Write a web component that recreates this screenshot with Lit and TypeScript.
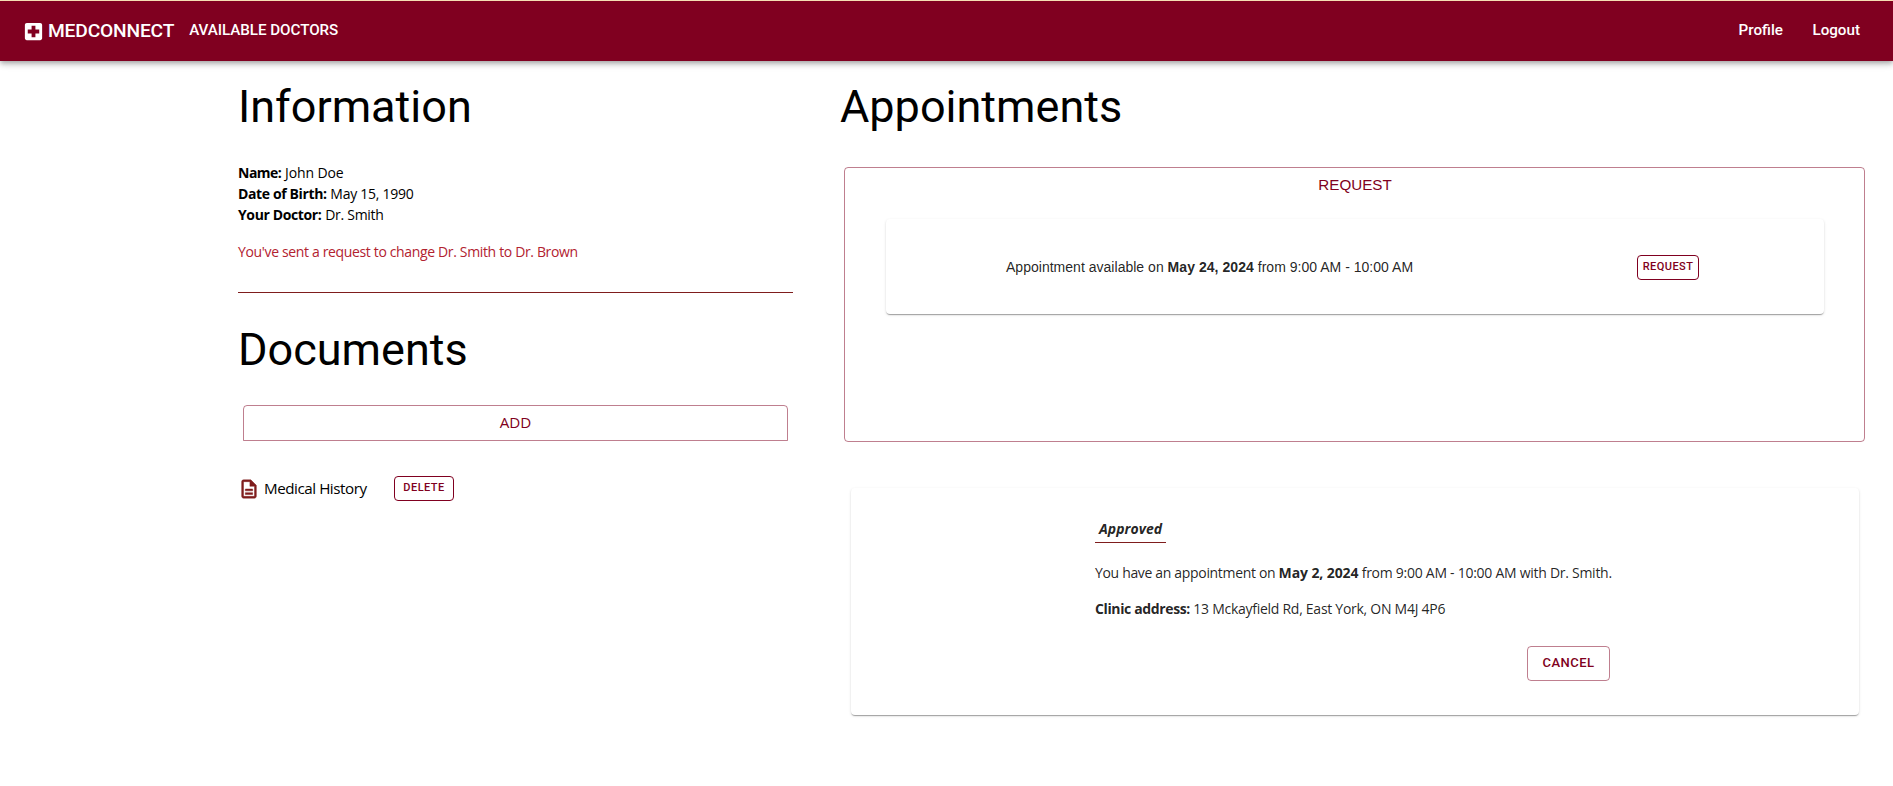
import { LitElement, html, css } from "lit";
import { customElement, property } from "lit/decorators.js";

@customElement("app-navbar")
class AppNavbar extends LitElement {
  static styles = css`
    :host { display: block; }
    .bar {
      display: flex; align-items: center; height: 61px; box-sizing: border-box;
      padding: 0 33px 3px 22px; background: #800020; color: #fff;
      border-top: 1px solid #f5deb3;
      font: 500 15.2px/20px Roboto, sans-serif;
      box-shadow: 0 2px 4px -1px rgba(0,0,0,.2), 0 4px 5px 0 rgba(0,0,0,.14), 0 1px 10px 0 rgba(0,0,0,.12);
    }
    .logo { width: 23px; height: 23px; margin: 3px 3px 0 0; fill: #fff; }
    .brand { font-size: 19.2px; line-height: 24px; letter-spacing: -0.17px; margin: 2px 15px 0 0; }
    .doctors { letter-spacing: -0.06px; }
    .spacer { flex: 1; }
    .link + .link { margin-left: 29.5px; }
  `;
  render() {
    return html`
      <nav class="bar">
        <svg class="logo" viewBox="0 0 24 24"><path d="M19 3H5c-1.100 0-1.990.9-1.990 2L3 19c0 1.100.9 2 2 2h14c1.100 0 2-.9 2-2V5c0-1.100-.9-2-2-2zm-1 11h-4v4h-4v-4H6v-4h4V6h4v4h4v4z"/></svg>
        <span class="brand">MEDCONNECT</span>
        <span class="doctors">AVAILABLE DOCTORS</span>
        <span class="spacer"></span>
        <span class="link">Profile</span>
        <span class="link">Logout</span>
      </nav>`;
  }
}

@customElement("outlined-button")
class OutlinedButton extends LitElement {
  @property({ reflect: true }) size = "small";
  static styles = css`
    :host { display: block; }
    button {
      display: flex; justify-content: center; box-sizing: border-box; margin: 0;
      width: 100%; height: 25px; padding: 3px 0 0; background: transparent;
      border: 1px solid #800020; border-radius: 4px; color: #800020;
      font: 500 11px/16px Roboto, sans-serif; letter-spacing: 0.46px;
    }
    :host([size="medium"]) button {
      height: 35px; padding-top: 6px; border-color: rgba(128,0,32,.5);
      font-size: 13px; line-height: 20px;
    }
  `;
  render() {
    return html`<button><slot></slot></button>`;
  }
}

@customElement("app-root")
class AppRoot extends LitElement {
  static styles = css`
    :host { display: block; min-height: 786px; background: #fff; color: #000;
      font: 14px/21px "Open Sans", "Noto Sans", sans-serif; }
    p, h1 { margin: 0; }
    .page { display: flex; padding: 20px 28px 0 238px; }
    .left { flex: none; width: 555px; margin-right: 47px; }
    .right { flex: 1; min-width: 0; }
    h1 { font: 400 45px/52px Roboto, sans-serif; }
    .info { margin-top: 29px; }
    .reg { letter-spacing: -0.27px; }
    .tight { letter-spacing: -0.12px; }
    b { font-weight: 700; letter-spacing: -0.37px; }
    .name { letter-spacing: -0.5px; }
    b.date { letter-spacing: -0.1px; }
    .lead { letter-spacing: -0.33px; }
    .notice { margin-top: 16px; letter-spacing: -0.35px; color: #b22230; }
    .rule { height: 1px; margin: 30px 0 31px; background: #7f1d1d; }
    .panel { box-sizing: border-box; border: 1px solid rgba(128,0,32,.5); color: #800020; text-align: center; }
    .add { height: 36px; margin: 29px 5px 0; padding-top: 5px; border-radius: 4px 4px 0 0;
      font-size: 15.2px; line-height: 22px; }
    .doc { display: flex; align-items: center; margin-top: 35px; }
    .doc-icon { width: 22px; height: 22px; fill: #7f1d1d; stroke: #7f1d1d; stroke-width: 0.5; }
    .doc-name { width: 130px; margin-left: 4px; font-size: 15.2px; letter-spacing: -0.46px; white-space: nowrap; }
    .delete { width: 60px; }
    .request { height: 275px; margin: 34px 0 0 4px; padding: 7px 40px 0 41px; border-radius: 4px;
      font: 15.2px/20px "Liberation Sans", Arial, sans-serif; }
    .card { box-sizing: border-box; border-radius: 4px; color: rgba(0,0,0,.87); background: #fff; text-align: left;
      box-shadow: 0 2px 1px -1px rgba(0,0,0,.2), 0 1px 1px 0 rgba(0,0,0,.14), 0 1px 3px 0 rgba(0,0,0,.12); }
    .slot { display: flex; align-items: center; justify-content: space-between; height: 95px; margin-top: 24px;
      padding: 1px 125px 0 120px; font-size: 14px; letter-spacing: 0.02px; }
    .slot b { letter-spacing: 0.05px; }
    .request-btn { width: 62px; }
    .appointment { display: flex; flex-direction: column; align-items: flex-start; height: 227px;
      margin: 46px 6px 0 11px; padding: 30px 249px 0 244px; white-space: nowrap; }
    .status { padding: 0 4px 3px 4px; border-bottom: 1px solid #7f1d1d; font-style: italic; }
    .status b { letter-spacing: 0.05px; }
    .line { margin-top: 19px; }
    .line + .line { margin-top: 15px; }
    .cancel { width: 83px; margin-top: 27px; align-self: flex-end; }
  `;
  render() {
    return html`
      <app-navbar></app-navbar>
      <main class="page">
        <section class="left">
          <h1>Information</h1>
          <div class="info">
            <p><b class="name">Name:</b> <span class="tight">John Doe</span></p>
            <p><b>Date of Birth:</b> <span class="reg">May 15, 1990</span></p>
            <p><b>Your Doctor:</b> <span class="reg">Dr. Smith</span></p>
            <p class="notice">You've sent a request to change Dr. Smith to Dr. Brown</p>
          </div>
          <div class="rule"></div>
          <h1>Documents</h1>
          <div class="panel add">ADD</div>
          <div class="doc">
            <svg class="doc-icon" viewBox="0 0 24 24"><path d="M8 16h8v2H8zm0-4h8v2H8zm6-10H6c-1.100 0-2 .9-2 2v16c0 1.100.89 2 1.990 2H18c1.100 0 2-.9 2-2V8l-6-6zm4 18H6V4h7v5h5v11z"/></svg>
            <span class="doc-name">Medical History</span>
            <outlined-button class="delete">DELETE</outlined-button>
          </div>
        </section>
        <section class="right">
          <h1>Appointments</h1>
          <div class="panel request">
            REQUEST
            <div class="card slot">
              <span>Appointment available on <b>May 24, 2024</b> from 9:00 AM - 10:00 AM</span>
              <outlined-button class="request-btn">REQUEST</outlined-button>
            </div>
          </div>
          <div class="card appointment">
            <div class="status"><b>Approved</b></div>
            <p class="line reg"><span class="lead">You have an appointment on </span><b class="date">May 2, 2024</b> from 9:00 AM - 10:00 AM with Dr. Smith.</p>
            <p class="line reg"><b>Clinic address:</b> 13 Mckayfield Rd, East York, ON M4J 4P6</p>
            <outlined-button class="cancel" size="medium">CANCEL</outlined-button>
          </div>
        </section>
      </main>`;
  }
}
